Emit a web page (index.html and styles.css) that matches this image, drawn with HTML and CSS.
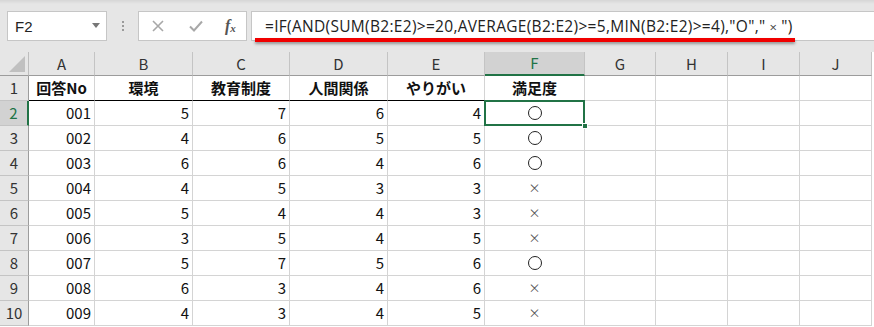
FILE: index.html
```html
<!DOCTYPE html>
<html lang="ja">
<head>
<meta charset="utf-8">
<link rel="stylesheet" href="styles.css">
</head>
<body>
<div class="app">
  <div class="toolbar">
    <div class="namebox"><span class="name">F2</span><span class="caret"></span></div>
    <div class="dots"><i></i><i></i><i></i></div>
    <div class="fnbtns">
      <svg class="ico" width="14" height="14" viewBox="0 0 14 14"><path d="M2 2L12 12M12 2L2 12" stroke="#a8a8a8" stroke-width="1.6" fill="none"/></svg>
      <svg class="ico" width="16" height="14" viewBox="0 0 16 14"><path d="M2 7.5L6 11.5L14 2.5" stroke="#a8a8a8" stroke-width="2" fill="none"/></svg>
      <span class="fx">f<sub>x</sub></span>
    </div>
    <div class="formula">
      <span class="ftext">=IF(AND(SUM(B2:E2)&gt;=20,AVERAGE(B2:E2)&gt;=5,MIN(B2:E2)&gt;=4),"<span class="fo">O</span>","<span class="fxx">×</span>")</span>
      <div class="redline"></div>
    </div>
  </div>
  <div class="sheet">
    <div class="corner"><svg width="16" height="16" viewBox="0 0 16 16"><path d="M16 0L16 16L0 16Z" fill="#c0c0c0"/></svg></div>
    <div class="ch">A</div><div class="ch">B</div><div class="ch">C</div><div class="ch">D</div><div class="ch">E</div><div class="ch sel">F</div><div class="ch">G</div><div class="ch">H</div><div class="ch">I</div><div class="ch">J</div>

    <div class="rh">1</div>
    <div class="c hd">回答No</div><div class="c hd">環境</div><div class="c hd">教育制度</div><div class="c hd">人間関係</div><div class="c hd">やりがい</div><div class="c hd">満足度</div><div class="c"></div><div class="c"></div><div class="c"></div><div class="c"></div>

    <div class="rh sel">2</div>
    <div class="c r">001</div><div class="c r">5</div><div class="c r">7</div><div class="c r">6</div><div class="c r">4</div><div class="c m active"><span class="o"></span><span class="handle"></span></div><div class="c"></div><div class="c"></div><div class="c"></div><div class="c"></div>

    <div class="rh">3</div>
    <div class="c r">002</div><div class="c r">4</div><div class="c r">6</div><div class="c r">5</div><div class="c r">5</div><div class="c m"><span class="o"></span></div><div class="c"></div><div class="c"></div><div class="c"></div><div class="c"></div>

    <div class="rh">4</div>
    <div class="c r">003</div><div class="c r">6</div><div class="c r">6</div><div class="c r">4</div><div class="c r">6</div><div class="c m"><span class="o"></span></div><div class="c"></div><div class="c"></div><div class="c"></div><div class="c"></div>

    <div class="rh">5</div>
    <div class="c r">004</div><div class="c r">4</div><div class="c r">5</div><div class="c r">3</div><div class="c r">3</div><div class="c m x">×</div><div class="c"></div><div class="c"></div><div class="c"></div><div class="c"></div>

    <div class="rh">6</div>
    <div class="c r">005</div><div class="c r">5</div><div class="c r">4</div><div class="c r">4</div><div class="c r">3</div><div class="c m x">×</div><div class="c"></div><div class="c"></div><div class="c"></div><div class="c"></div>

    <div class="rh">7</div>
    <div class="c r">006</div><div class="c r">3</div><div class="c r">5</div><div class="c r">4</div><div class="c r">5</div><div class="c m x">×</div><div class="c"></div><div class="c"></div><div class="c"></div><div class="c"></div>

    <div class="rh">8</div>
    <div class="c r">007</div><div class="c r">5</div><div class="c r">7</div><div class="c r">5</div><div class="c r">6</div><div class="c m"><span class="o"></span></div><div class="c"></div><div class="c"></div><div class="c"></div><div class="c"></div>

    <div class="rh">9</div>
    <div class="c r">008</div><div class="c r">6</div><div class="c r">3</div><div class="c r">4</div><div class="c r">6</div><div class="c m x">×</div><div class="c"></div><div class="c"></div><div class="c"></div><div class="c"></div>

    <div class="rh">10</div>
    <div class="c r">009</div><div class="c r">4</div><div class="c r">3</div><div class="c r">4</div><div class="c r">5</div><div class="c m x">×</div><div class="c"></div><div class="c"></div><div class="c"></div><div class="c"></div>
  </div>
</div>
</body>
</html>
```
FILE: styles.css
```css
* { box-sizing: border-box; }
html, body { margin: 0; padding: 0; background: #ffffff; }
body { width: 874px; height: 327px; overflow: hidden; font-family: "Noto Sans CJK JP", "Noto Sans", sans-serif; color: #111; }

.app { width: 874px; }

.toolbar {
  height: 52px;
  background: linear-gradient(#d6d6d6 0px, #e6e6e6 4px, #e6e6e6 100%);
  display: flex;
  align-items: flex-start;
  padding-top: 11px;
  padding-left: 7px;
}
.namebox {
  width: 100px; height: 30px;
  background: #fff;
  border: 1px solid #c6c6c6;
  display: flex; align-items: center; justify-content: space-between;
  padding: 0 6px 0 7px;
}
.name { font-family: "Liberation Sans", sans-serif; font-size: 15px; color: #222; }
.caret { width: 0; height: 0; border-left: 4px solid transparent; border-right: 4px solid transparent; border-top: 5px solid #777; margin-top: -2px; }
.dots { width: 31px; height: 30px; display: flex; flex-direction: column; align-items: center; justify-content: center; gap: 2px; }
.dots i { display: block; width: 2px; height: 2px; background: #9a9a9a; }
.fnbtns {
  width: 109px; height: 30px;
  background: #fff;
  border: 1px solid #c6c6c6;
  display: flex; align-items: center;
  padding-left: 12px;
}
.fnbtns .ico { display: block; }
.fnbtns .ico + .ico { margin-left: 23px; }
.fx { margin-left: 21px; font-family: "Liberation Serif", serif; font-style: italic; font-weight: bold; font-size: 16px; color: #555; line-height: 1; }
.fx sub { font-size: 11px; vertical-align: -1px; }
.formula {
  position: relative;
  margin-left: 4px;
  flex: 1;
  height: 30px;
  background: #fff;
  border: 1px solid #c6c6c6;
  border-right: none;
  padding-left: 13px;
  display: flex; align-items: center;
}
.ftext { font-family: "Open Sans", "Noto Sans CJK JP", sans-serif; font-size: 15.5px; color: #222; white-space: nowrap; letter-spacing: 0.3px; padding-bottom: 1px; }
.fo { font-size: 15.5px; }
.fxx { font-size: 13px; padding: 0 4px; color: #444; }
.redline {
  position: absolute;
  left: 3px; top: 26px;
  width: 540px; height: 4px;
  background: #f00000;
  box-shadow: 0 2px 3px rgba(0,0,0,0.35);
}

.sheet {
  display: grid;
  grid-template-columns: 29px 66px 98px 97px 98px 97px 100px 71px 72px 72px 72px;
  grid-template-rows: 24px repeat(10, 25px);
}
.corner { background: #e6e6e6; border-right: 1px solid #bdbdbd; border-bottom: 1px solid #9c9c9c; display: flex; align-items: flex-end; justify-content: flex-end; padding: 0 3px 3px 0; }
.ch {
  background: #e6e6e6;
  border-right: 1px solid #c4c4c4;
  border-bottom: 1px solid #9c9c9c;
  text-align: center;
  font-family: "Noto Sans CJK JP", sans-serif;
  font-size: 15px; line-height: 23px; color: #333;
}
.ch.sel { background: #d2d2d2; color: #217346; border-bottom: 2px solid #217346; line-height: 22px; }
.rh {
  background: #e6e6e6;
  border-right: 1px solid #9c9c9c;
  border-bottom: 1px solid #c4c4c4;
  text-align: center;
  font-size: 15px; line-height: 24px; color: #333;
}
.rh.sel { background: #d2d2d2; color: #217346; border-right: 2px solid #217346; }
.c {
  position: relative;
  border-right: 1px solid #d4d4d4;
  border-bottom: 1px solid #d4d4d4;
  font-size: 15px; line-height: 24px; color: #111;
  white-space: nowrap;
}
.c.r { text-align: right; padding-right: 3px; }
.c.hd { text-align: center; font-weight: bold; border-bottom: 1px solid #000; }
.c.m { display: flex; align-items: center; justify-content: center; }
.c.x { font-size: 12px; color: #555; }
.o { display: block; width: 14px; height: 14px; border: 1px solid #222; border-radius: 50%; }
.active::after {
  content: "";
  position: absolute;
  left: -1px; top: -1px; right: -1px; bottom: -1px;
  border: 2px solid #217346;
}
.handle { position: absolute; right: -4px; bottom: -4px; width: 6px; height: 6px; background: #217346; border: 1px solid #fff; z-index: 2; }
```
